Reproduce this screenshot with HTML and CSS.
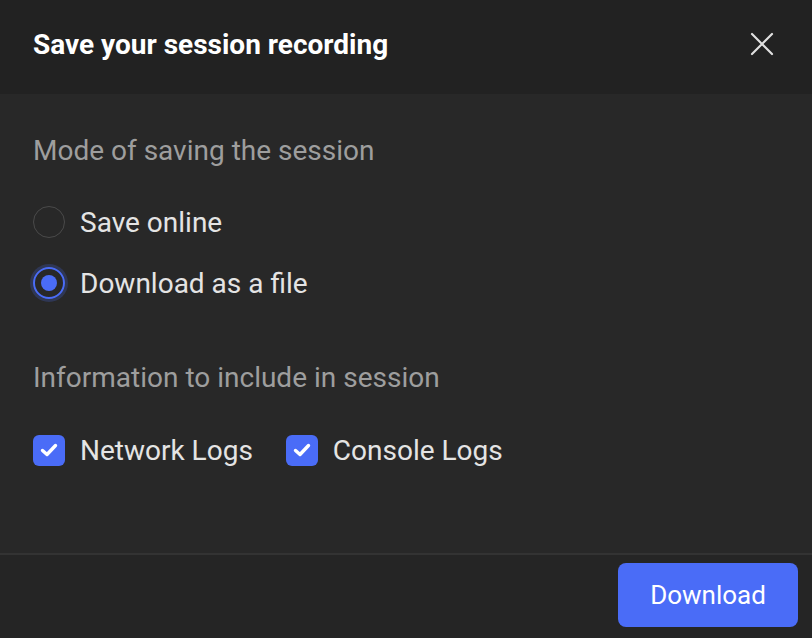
FILE: index.html
```html
<!DOCTYPE html>
<html lang="en">
<head>
<meta charset="utf-8">
<title>Save your session recording</title>
<link rel="stylesheet" href="styles.css">
</head>
<body>
<div class="dialog">
  <header class="dialog-header">
    <h1 class="title">Save your session recording</h1>
    <button class="close" aria-label="Close">
      <svg width="24" height="24" viewBox="0 0 24 24"><path d="M2 2 L22 22 M22 2 L2 22" stroke="#e0e0e0" stroke-width="2.2" stroke-linecap="round" fill="none"/></svg>
    </button>
  </header>
  <main class="dialog-body">
    <div class="section-label">Mode of saving the session</div>
    <div class="radio-group">
      <label class="option">
        <span class="radio"></span>
        <span class="option-text">Save online</span>
      </label>
      <label class="option">
        <span class="radio checked"><span class="dot"></span></span>
        <span class="option-text">Download as a file</span>
      </label>
    </div>
    <div class="section-label second">Information to include in session</div>
    <div class="check-group">
      <label class="option">
        <span class="checkbox"><svg width="22" height="22" viewBox="0 0 22 22"><path d="M4.5 11.5 L9 15.5 L17.5 6.5" stroke="#fff" stroke-width="3.4" stroke-linecap="round" stroke-linejoin="round" fill="none"/></svg></span>
        <span class="option-text">Network Logs</span>
      </label>
      <label class="option">
        <span class="checkbox"><svg width="22" height="22" viewBox="0 0 22 22"><path d="M4.5 11.5 L9 15.5 L17.5 6.5" stroke="#fff" stroke-width="3.4" stroke-linecap="round" stroke-linejoin="round" fill="none"/></svg></span>
        <span class="option-text">Console Logs</span>
      </label>
    </div>
  </main>
  <footer class="dialog-footer">
    <button class="primary">Download</button>
  </footer>
</div>
</body>
</html>
```
FILE: styles.css
```css
* { box-sizing: border-box; }
html, body {
  margin: 0;
  padding: 0;
  background: #282828;
}
body {
  font-family: Roboto, "Noto Sans", sans-serif;
}
.dialog {
  width: 812px;
  height: 638px;
  display: flex;
  flex-direction: column;
  background: #282828;
}
.dialog-header {
  height: 94px;
  flex: none;
  background: #222222;
  display: flex;
  align-items: center;
  justify-content: space-between;
  padding: 0 38px 0 33px;
}
.title {
  margin: 0;
  font-size: 28px;
  font-weight: 700;
  color: #ffffff;
  line-height: 32px;
  margin-top: -4px;
}
.close {
  background: none;
  border: 0;
  padding: 0;
  width: 24px;
  height: 24px;
  display: flex;
  margin-top: -6px;
}
.dialog-body {
  flex: 1;
  padding: 40px 33px 0 33px;
}
.section-label {
  font-size: 28px;
  line-height: 32px;
  padding-top: 1px;
  color: #9e9e9e;
}
.section-label.second {
  margin-top: 62px;
}
.radio-group {
  display: flex;
  flex-direction: column;
  gap: 29px;
  margin-top: 39px;
}
.check-group {
  display: flex;
  gap: 33px;
  margin-top: 40px;
}
.option {
  display: flex;
  align-items: center;
  gap: 15px;
  height: 32px;
}
.option-text {
  font-size: 28px;
  color: #e4e4e4;
  line-height: 30px;
  padding-top: 2px;
}
.radio {
  width: 32px;
  height: 32px;
  border-radius: 50%;
  border: 1.5px solid #4a4a4a;
  display: flex;
  align-items: center;
  justify-content: center;
}
.radio.checked {
  border: 2px solid #4a6cf7;
  box-shadow: 0 0 0 3px rgba(74, 108, 247, 0.22);
}
.dot {
  width: 16px;
  height: 16px;
  border-radius: 50%;
  background: #4a6cf7;
}
.checkbox {
  width: 32px;
  height: 31px;
  border-radius: 6px;
  background: #4a6cf7;
  display: flex;
  align-items: center;
  justify-content: center;
}
.dialog-footer {
  height: 85px;
  flex: none;
  border-top: 2px solid #333333;
  background: #252525;
  display: flex;
  justify-content: flex-end;
  align-items: flex-start;
  padding: 8px 14px 0 0;
}
.primary {
  width: 180px;
  height: 64px;
  border: 0;
  border-radius: 8px;
  background: #4a6cf7;
  color: #ffffff;
  font-family: Roboto, sans-serif;
  font-size: 26px;
}
```
